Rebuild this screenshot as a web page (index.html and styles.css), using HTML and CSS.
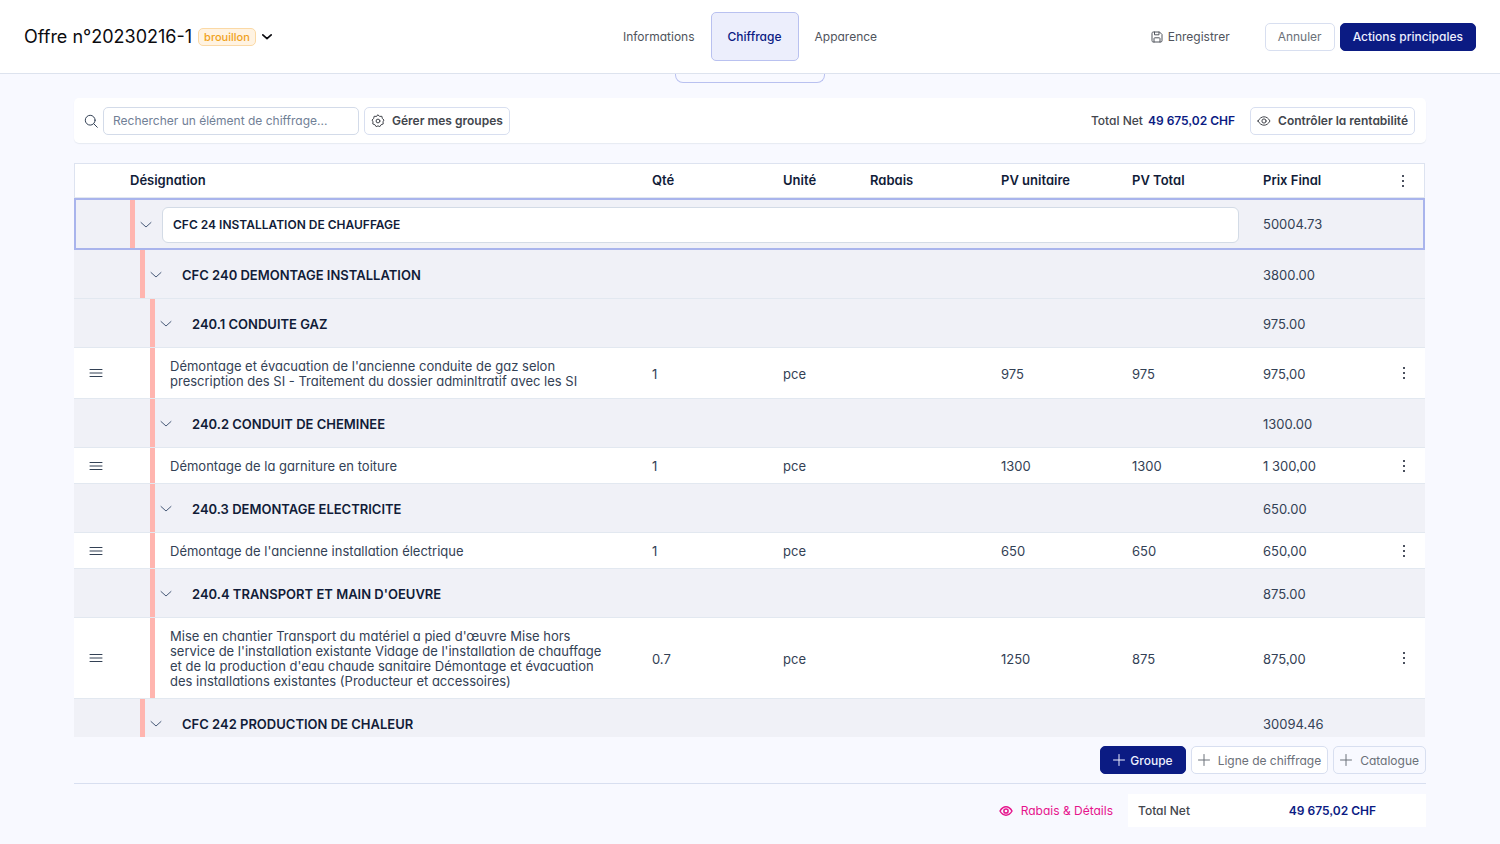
FILE: index.html
```html
<!DOCTYPE html>
<html lang="fr">
<head>
<meta charset="utf-8">
<title>Offre n°20230216-1</title>
<link rel="stylesheet" href="styles.css">
</head>
<body>
<svg class="sprite" aria-hidden="true">
  <symbol id="chevron" viewBox="0 0 12 12"><path d="M1 3.500 6 8l5-4.500"/></symbol>
  <symbol id="dots" viewBox="0 0 12 14"><g fill="currentColor" stroke="none"><circle cx="6" cy="2" r="1"/><circle cx="6" cy="7" r="1"/><circle cx="6" cy="12" r="1"/></g></symbol>
  <symbol id="grip" viewBox="0 0 14 12"><path d="M1 2.500h12M1 6h12M1 9.500h12"/></symbol>
  <symbol id="plus" viewBox="0 0 12 12"><path d="M6 .5v11M.5 6h11"/></symbol>
  <symbol id="eye" viewBox="0 0 14 14"><path d="M1 7C2.600 4.200 4.600 2.800 7 2.800S11.400 4.200 13 7c-1.600 2.800-3.600 4.200-6 4.200S2.600 9.800 1 7z"/><circle cx="7" cy="7" r="2.100"/></symbol>
  <symbol id="search" viewBox="0 0 14 14"><circle cx="6.200" cy="6.200" r="4.900"/><path d="m9.800 9.800 3.500 3.500"/></symbol>
  <symbol id="gear" viewBox="0 0 14 14"><path d="M7 1 8.700 2.400 10.900 2.300 11.300 4.500 13 6 12 7.800 12.200 10 10.100 10.700 8.900 12.600 7 11.900 5.100 12.600 3.900 10.700 1.800 10 2 7.800 1 6 2.700 4.500 3.100 2.300 5.300 2.400z"/><circle cx="7" cy="7" r="1.900"/></symbol>
  <symbol id="save" viewBox="0 0 12 12"><path d="M1 2.200C1 1.500 1.500 1 2.200 1H8.500L11 3.500v6.300c0 .7-.5 1.200-1.200 1.200H2.200C1.500 11 1 10.500 1 9.800zM3 11V7.500c0-.4.300-.7.700-.7h4.600c.4 0 .7.300.7.700V11M3.500 1v2.800h4.500V1"/></symbol>
</svg>

<header class="topbar">
  <div class="title">
    <h1>Offre n°20230216-1</h1>
    <span class="badge">brouillon</span>
    <button class="plain" aria-label="Changer le statut"><svg class="icon bold"><use href="#chevron"/></svg></button>
  </div>
  <nav class="tabs">
    <a href="#informations">Informations</a>
    <a href="#chiffrage" class="active" aria-current="page">Chiffrage</a>
    <a href="#apparence">Apparence</a>
  </nav>
  <div class="actions">
    <button class="plain save"><svg class="icon"><use href="#save"/></svg>Enregistrer</button>
    <button class="btn muted wide">Annuler</button>
    <button class="btn primary wide">Actions principales</button>
  </div>
</header>

<main class="page">
  <div class="pull-tab"></div>

  <section class="toolbar">
    <label for="search" aria-label="Rechercher"><svg class="icon search-icon"><use href="#search"/></svg></label>
    <input id="search" type="text" placeholder="Rechercher un élément de chiffrage...">
    <button class="btn strong"><svg class="icon"><use href="#gear"/></svg>Gérer mes groupes</button>
    <p class="net"><span>Total Net</span><strong>49 675,02 CHF</strong></p>
    <button class="btn strong"><svg class="icon"><use href="#eye"/></svg>Contrôler la rentabilité</button>
  </section>

  <div class="table-area">
    <table class="quote">
      <colgroup><col class="c-grip"><col><col class="c-std"><col class="c-unit"><col class="c-std"><col class="c-std"><col class="c-std"><col class="c-std"><col class="c-menu"></colgroup>
      <thead>
        <tr><th></th><th class="first">Désignation</th><th>Qté</th><th>Unité</th><th>Rabais</th><th>PV unitaire</th><th>PV Total</th><th>Prix Final</th><th class="menu"><button class="plain" aria-label="Colonnes"><svg class="icon dots"><use href="#dots"/></svg></button></th></tr>
      </thead>
      <tbody>
        <tr class="group selected"><td></td><td colspan="6" class="bar l1"><div class="name"><button class="plain" aria-label="Replier"><svg class="icon"><use href="#chevron"/></svg></button><input type="text" aria-label="Nom du groupe" value="CFC 24 INSTALLATION DE CHAUFFAGE"></div></td><td>50004.73</td><td></td></tr>
        <tr class="group"><td></td><td colspan="6" class="bar l2"><div class="name"><button class="plain" aria-label="Replier"><svg class="icon"><use href="#chevron"/></svg></button><span>CFC 240 DEMONTAGE INSTALLATION</span></div></td><td>3800.00</td><td></td></tr>
        <tr class="group"><td></td><td colspan="6" class="bar l3"><div class="name"><button class="plain" aria-label="Replier"><svg class="icon"><use href="#chevron"/></svg></button><span>240.1 CONDUITE GAZ</span></div></td><td>975.00</td><td></td></tr>
        <tr class="item"><td class="handle"><button class="plain" aria-label="Déplacer"><svg class="icon grip"><use href="#grip"/></svg></button></td><td class="bar l3">Démontage et évacuation de l'ancienne conduite de gaz selon<br>prescription des SI - Traitement du dossier adminltratif avec les SI</td><td>1</td><td>pce</td><td></td><td>975</td><td>975</td><td>975,00</td><td class="menu"><button class="plain" aria-label="Options"><svg class="icon dots"><use href="#dots"/></svg></button></td></tr>
        <tr class="group"><td></td><td colspan="6" class="bar l3"><div class="name"><button class="plain" aria-label="Replier"><svg class="icon"><use href="#chevron"/></svg></button><span>240.2 CONDUIT DE CHEMINEE</span></div></td><td>1300.00</td><td></td></tr>
        <tr class="item"><td class="handle"><button class="plain" aria-label="Déplacer"><svg class="icon grip"><use href="#grip"/></svg></button></td><td class="bar l3">Démontage de la garniture en toiture</td><td>1</td><td>pce</td><td></td><td>1300</td><td>1300</td><td>1 300,00</td><td class="menu"><button class="plain" aria-label="Options"><svg class="icon dots"><use href="#dots"/></svg></button></td></tr>
        <tr class="group"><td></td><td colspan="6" class="bar l3"><div class="name"><button class="plain" aria-label="Replier"><svg class="icon"><use href="#chevron"/></svg></button><span>240.3 DEMONTAGE ELECTRICITE</span></div></td><td>650.00</td><td></td></tr>
        <tr class="item"><td class="handle"><button class="plain" aria-label="Déplacer"><svg class="icon grip"><use href="#grip"/></svg></button></td><td class="bar l3">Démontage de l'ancienne installation électrique</td><td>1</td><td>pce</td><td></td><td>650</td><td>650</td><td>650,00</td><td class="menu"><button class="plain" aria-label="Options"><svg class="icon dots"><use href="#dots"/></svg></button></td></tr>
        <tr class="group"><td></td><td colspan="6" class="bar l3"><div class="name"><button class="plain" aria-label="Replier"><svg class="icon"><use href="#chevron"/></svg></button><span>240.4 TRANSPORT ET MAIN D'OEUVRE</span></div></td><td>875.00</td><td></td></tr>
        <tr class="item"><td class="handle"><button class="plain" aria-label="Déplacer"><svg class="icon grip"><use href="#grip"/></svg></button></td><td class="bar l3">Mise en chantier Transport du matériel a pied d'œuvre Mise hors<br>service de l'installation existante Vidage de l'installation de chauffage<br>et de la production d'eau chaude sanitaire Démontage et évacuation<br>des installations existantes (Producteur et accessoires)</td><td>0.7</td><td>pce</td><td></td><td>1250</td><td>875</td><td>875,00</td><td class="menu"><button class="plain" aria-label="Options"><svg class="icon dots"><use href="#dots"/></svg></button></td></tr>
        <tr class="group"><td></td><td colspan="6" class="bar l2"><div class="name"><button class="plain" aria-label="Replier"><svg class="icon"><use href="#chevron"/></svg></button><span>CFC 242 PRODUCTION DE CHALEUR</span></div></td><td>30094.46</td><td></td></tr>
      </tbody>
    </table>
  </div>

  <div class="adders">
    <button class="btn primary"><svg class="icon"><use href="#plus"/></svg>Groupe</button>
    <button class="btn muted"><svg class="icon"><use href="#plus"/></svg>Ligne de chiffrage</button>
    <button class="btn muted clear"><svg class="icon"><use href="#plus"/></svg>Catalogue</button>
  </div>

  <footer class="totals">
    <button class="plain details"><svg class="icon"><use href="#eye"/></svg>Rabais &amp; Détails</button>
    <p class="total-box"><span>Total Net</span><strong>49 675,02 CHF</strong></p>
  </footer>
</main>
</body>
</html>
```

FILE: styles.css
```css
* { box-sizing: border-box; }

body {
  margin: 0;
  height: 100vh;
  display: flex;
  flex-direction: column;
  overflow: hidden;
  background: #f8f9ff;
  color: #334155;
  font: 12px/15px Inter, "Open Sans", sans-serif;
  font-feature-settings: "cv11", "ss03";
}

h1, p { margin: 0; }
button, input { font: inherit; color: inherit; font-feature-settings: inherit; }
button { cursor: pointer; white-space: nowrap; }
.sprite { display: none; }

.icon {
  width: 12px;
  height: 12px;
  flex: none;
  fill: none;
  stroke: currentColor;
  stroke-width: 1;
  stroke-linecap: round;
  stroke-linejoin: round;
}
.icon.bold { width: 10px; height: 10px; stroke-width: 2; }
.icon.grip { width: 14px; }
.icon.dots { height: 14px; color: #0f172a; }
.icon.search-icon { width: 14px; height: 14px; display: block; color: #334155; }

.plain {
  display: inline-flex;
  align-items: center;
  padding: 0;
  border: 0;
  background: none;
}

.btn {
  display: inline-flex;
  align-items: center;
  justify-content: center;
  gap: 8px;
  height: 28px;
  padding: 0 6px;
  border: 1px solid #d8dff0;
  border-radius: 5px;
  background: #fff;
}
.btn.strong { font-weight: 600; color: #43464d; gap: 7px; }
.btn.strong .icon { width: 14px; height: 14px; }
.btn.muted { color: #6b7078; }
.btn.clear { background: transparent; }
.btn.primary { color: #eef0ff; background: #0b1b83; border-color: #0b1b83; padding: 0 12px; gap: 5px; font-weight: 500; }
.btn.wide { padding: 0 12px; }

.topbar {
  flex: none;
  display: grid;
  grid-template-columns: 1fr auto 1fr;
  align-items: center;
  height: 74px;
  padding: 0 24px;
  background: #fff;
  border-bottom: 1px solid #dde3ee;
}
.title { display: flex; align-items: center; gap: 6px; color: #0b0b0f; }
h1 { font-size: 18px; line-height: 24px; font-weight: 400; }
.badge {
  padding: 0 5px;
  border: 1px solid #fbd9a5;
  border-radius: 5px;
  background: #fff3e2;
  color: #f0a21c;
  font-size: 11px;
  font-weight: 500;
  line-height: 16px;
}
.tabs { display: flex; align-items: center; }
.tabs a { padding: 16px; color: #50545c; text-decoration: none; }
.tabs .active {
  border: 1px solid #b9c1f0;
  border-radius: 5px;
  background: #eceefc;
  color: #0b1b83;
  font-weight: 500;
}
.actions { display: flex; justify-content: flex-end; align-items: center; gap: 5px; }
.save { gap: 5px; margin-right: 30px; color: #50545c; }

.page {
  flex: 1;
  min-height: 0;
  display: flex;
  flex-direction: column;
  padding: 0 74px 17px;
}
.pull-tab {
  flex: none;
  align-self: center;
  width: 150px;
  height: 9px;
  margin-bottom: 15px;
  border: 1px solid #b9c1f0;
  border-top: 0;
  border-radius: 0 0 8px 8px;
}

.toolbar {
  flex: none;
  display: flex;
  align-items: center;
  gap: 5px;
  height: 45px;
  padding: 0 11px 0 10px;
  border-radius: 5px;
  background: #fff;
  box-shadow: 0 1px 1px #e6eaf2;
}
.toolbar input {
  width: 256px;
  height: 28px;
  padding: 0 9px;
  border: 1px solid #d3dbe9;
  border-radius: 5px;
}
.toolbar input::placeholder { color: #718096; opacity: 1; }
.net { display: flex; gap: 5px; margin: 0 10px 0 auto; font-weight: 500; color: #43464d; }
.net strong, .total-box strong { font-weight: 600; color: #0b1b83; }

.table-area { flex: 1; min-height: 0; margin: 20px 0 9px; overflow: hidden; }
.quote {
  width: 100%;
  table-layout: fixed;
  border-collapse: separate;
  border-spacing: 0;
  border-right: 1px solid #f8f9ff;
  font-size: 13px;
}
.c-grip { width: 56px; }
.c-std { width: 131px; }
.c-unit { width: 87px; }
.c-menu { width: 39px; }

th, td { padding: 0 8px; text-align: left; border-bottom: 1px solid #e2e8f0; }
th { height: 35px; background: #fff; border-top: 1px solid #dde3f0; font-weight: 600; color: #111c38; }
th:first-child { border-left: 1px solid #dde3f0; }
th:last-child { border-right: 1px solid #dde3f0; }
th.first { padding-left: 0; }
.handle button, .menu button { display: flex; margin: 0 auto; }
.handle { padding: 0 20px 0 8px; }
.menu { padding: 0 10px 0 6px; }

.bar { background: linear-gradient(#ffb5af, #ffb5af) no-repeat 0 0 / 5px 100%; }
.l2 { background-position: 10px 0; }
.l3 { background-position: 20px 0; }

.item { background: #fff; }
.item td { padding-top: 11px; padding-bottom: 9px; }
.item .handle, .item .menu { padding-top: 0; padding-bottom: 0; }
.item .bar { padding-left: 40px; white-space: nowrap; }

.group { background: #f0f1f7; }
.group td { height: 49px; padding-top: 2px; }
.group .bar { padding: 2px 16px 0 10px; }
.group .l2 { padding-left: 20px; }
.group .l3 { padding-left: 30px; }
.name { display: flex; align-items: center; gap: 10px; font-weight: 600; color: #111c38; }
.name .plain { color: #475a78; }
.name span { padding-left: 10px; }
.name input {
  flex: 1;
  height: 36px;
  padding: 0 10px;
  border: 1px solid #d3dbe6;
  border-radius: 6px;
  background: #fff;
  font-size: 12px;
}
.selected { outline: 2px solid #a9b4ec; outline-offset: -2px; }
.group.selected td { height: 52px; border-bottom-color: transparent; }

.adders { flex: none; display: flex; justify-content: flex-end; gap: 5px; }
.totals {
  flex: none;
  display: flex;
  justify-content: flex-end;
  gap: 15px;
  margin-top: 9px;
  padding-top: 10px;
  border-top: 1px solid #d8dff0;
}
.details { gap: 8px; color: #e6148c; }
.details .icon { width: 14px; height: 14px; stroke-width: 1.500; }
.total-box {
  display: flex;
  align-items: center;
  justify-content: space-between;
  width: 298px;
  height: 33px;
  padding: 0 50px 0 10px;
  background: #fff;
  font-weight: 500;
  color: #43464d;
}
```
